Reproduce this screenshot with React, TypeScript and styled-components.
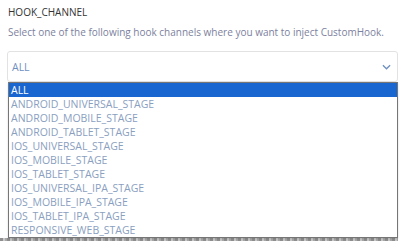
import React from 'react';
import styled, { createGlobalStyle } from 'styled-components';

const channels = [
      'ALL',
      'ANDROID_UNIVERSAL_STAGE',
      'ANDROID_MOBILE_STAGE',
      'ANDROID_TABLET_STAGE',
      'IOS_UNIVERSAL_STAGE',
      'IOS_MOBILE_STAGE',
      'IOS_TABLET_STAGE',
      'IOS_UNIVERSAL_IPA_STAGE',
      'IOS_MOBILE_IPA_STAGE',
      'IOS_TABLET_IPA_STAGE',
      'RESPONSIVE_WEB_STAGE',
];

const App: React.FC = () => {
      return (
            <>
                  <GlobalStyle />
                  <Page>
                        <Label>HOOK_CHANNEL</Label>
                        <Description>
                              Select one of the following hook channels where you want to inject CustomHook.
                        </Description>
                        <SelectWrap>
                              <SelectBox>
                                    <SelectValue>ALL</SelectValue>
                                    <Chevron viewBox='0 0 10 6'>
                                          <path d='M1 1l4 4 4-4' fill='none' stroke='#6f8fbf' strokeWidth='1.4' />
                                    </Chevron>
                              </SelectBox>
                              <Options>
                                    {channels.map((c, i) => (
                                          <Option key={c} selected={i === 0}>
                                                {c}
                                          </Option>
                                    ))}
                              </Options>
                        </SelectWrap>
                        <BelowStrip />
                  </Page>
            </>
      );
};

export default App;

const GlobalStyle = createGlobalStyle`
      html, body {
            margin: 0;
            padding: 0;
            background: #fff;
            overflow: hidden;
      }
`;

const Page = styled.div`
      height: 241px;
      box-sizing: border-box;
      overflow: hidden;
      padding: 5px 2px 0 8px;
      font-family: 'Open Sans', sans-serif;
`;

const Label = styled.div`
      font-size: 10px;
      color: #333;
      line-height: 14px;
`;

const Description = styled.div`
      margin-top: 6px;
      font-size: 10px;
      color: #7c7f9e;
      line-height: 14px;
`;

const SelectWrap = styled.div`
      position: relative;
      margin: 12px 0 0 -1px;
`;

const SelectBox = styled.div`
      height: 31px;
      border: 1px solid #e2e2e2;
      border-radius: 3px;
      display: flex;
      align-items: center;
      justify-content: space-between;
      padding: 0 6px 0 4px;
      box-sizing: border-box;
`;

const SelectValue = styled.span`
      font-size: 10.5px;
      color: #6f8fbf;
`;

const Chevron = styled.svg`
      width: 9px;
      height: 6px;
`;

const Options = styled.div`
      position: absolute;
      top: 31px;
      left: 1px;
      right: 0;
      background: #fff;
      border: 1px solid #767676;
      box-shadow: 0 1px 2px rgba(0, 0, 0, 0.15);
      z-index: 2;
`;

const Option = styled.div<{ selected?: boolean }>`
      height: 14px;
      line-height: 14px;
      padding-left: 2px;
      font-size: 10.5px;
      color: ${(p) => (p.selected ? '#fff' : '#8aa0c0')};
      background: ${(p) => (p.selected ? '#1a66d1' : 'transparent')};
`;

const BelowStrip = styled.div`
      margin: 156px 0 0 -8px;
      height: 3px;
      background: repeating-linear-gradient(90deg, #8f8f8f 0 3px, #c8c8c8 3px 5px, #a8a8a8 5px 7px);
`;
